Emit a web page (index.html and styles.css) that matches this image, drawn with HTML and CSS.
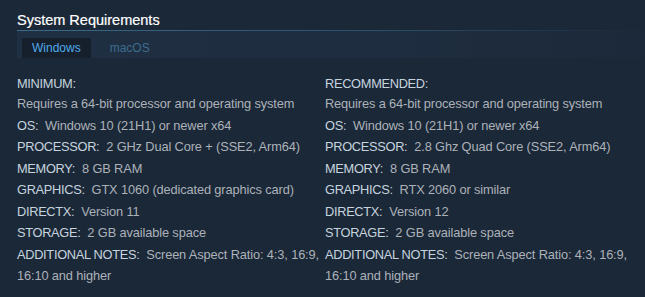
FILE: index.html
```html
<!DOCTYPE html>
<html lang="en">
<head>
  <meta charset="UTF-8">
  <title>System Requirements</title>
  <link rel="stylesheet" href="styles.css">
</head>
<body>

  <div class="sysreq">
    <h2>System Requirements</h2>

    <div class="tabs">
      <div class="tab active">Windows</div>
      <div class="tab">macOS</div>
    </div>

    <div class="cols">
      <ul class="col">
        <li class="title">MINIMUM:</li>
        <li>Requires a 64-bit processor and operating system</li>
        <li><span class="label">OS:</span>&nbsp; Windows 10 (21H1) or newer x64</li>
        <li><span class="label">PROCESSOR:</span>&nbsp; 2 GHz Dual Core + (SSE2, Arm64)</li>
        <li><span class="label">MEMORY:</span>&nbsp; 8 GB RAM</li>
        <li><span class="label">GRAPHICS:</span>&nbsp; GTX 1060 (dedicated graphics card)</li>
        <li><span class="label">DIRECTX:</span>&nbsp; Version 11</li>
        <li><span class="label">STORAGE:</span>&nbsp; 2 GB available space</li>
        <li><span class="label">ADDITIONAL NOTES:</span>&nbsp; Screen Aspect Ratio: 4:3, 16:9, 16:10 and higher</li>
      </ul>
      <ul class="col">
        <li class="title">RECOMMENDED:</li>
        <li>Requires a 64-bit processor and operating system</li>
        <li><span class="label">OS:</span>&nbsp; Windows 10 (21H1) or newer x64</li>
        <li><span class="label">PROCESSOR:</span>&nbsp; 2.8 Ghz Quad Core (SSE2, Arm64)</li>
        <li><span class="label">MEMORY:</span>&nbsp; 8 GB RAM</li>
        <li><span class="label">GRAPHICS:</span>&nbsp; RTX 2060 or similar</li>
        <li><span class="label">DIRECTX:</span>&nbsp; Version 12</li>
        <li><span class="label">STORAGE:</span>&nbsp; 2 GB available space</li>
        <li><span class="label">ADDITIONAL NOTES:</span>&nbsp; Screen Aspect Ratio: 4:3, 16:9, 16:10 and higher</li>
      </ul>
    </div>
  </div>

</body>
</html>
```

FILE: styles.css
```css
body {
  margin: 0;
  background-color: #1b2838;
  font-family: "Liberation Sans", Arial, sans-serif;
  color: #acb2b8;
}

.sysreq {
  padding: 0 0 0 17px;
}

h2 {
  margin: 0;
  padding-top: 11px;
  height: 19px;
  font-size: 14.5px;
  font-weight: normal;
  line-height: 18px;
  color: #ffffff;
  -webkit-text-stroke: 0.2px #ffffff;
}

.tabs {
  display: flex;
  align-items: flex-end;
  height: 27px;
  padding-left: 5px;
  border-top: 1px solid;
  border-image: linear-gradient(to right, #3a6a8c 0%, #2a4e68 60%, #1b2838 100%) 1;
  background: linear-gradient(to right, #1f3042 0%, #1e2d3f 60%, #1c293a 100%);
}

.tab {
  height: 20px;
  padding: 0 10px;
  font-size: 12px;
  line-height: 20px;
  color: #3d6c8e;
  margin-right: 9px;
}

.tab.active {
  background-color: #16202d;
  color: #4fa9e8;
}

.cols {
  display: flex;
  margin-top: 16px;
}

.col {
  list-style: none;
  margin: 0;
  padding: 0 4px 0 0;
  width: 304px;
  font-size: 12.8px;
  letter-spacing: -0.12px;
  line-height: 21.5px;
}

.col li.title {
  color: #c6d4df;
  line-height: 19px;
  letter-spacing: -0.3px;
}

.label {
  color: #c6d4df;
  letter-spacing: -0.3px;
}
```
